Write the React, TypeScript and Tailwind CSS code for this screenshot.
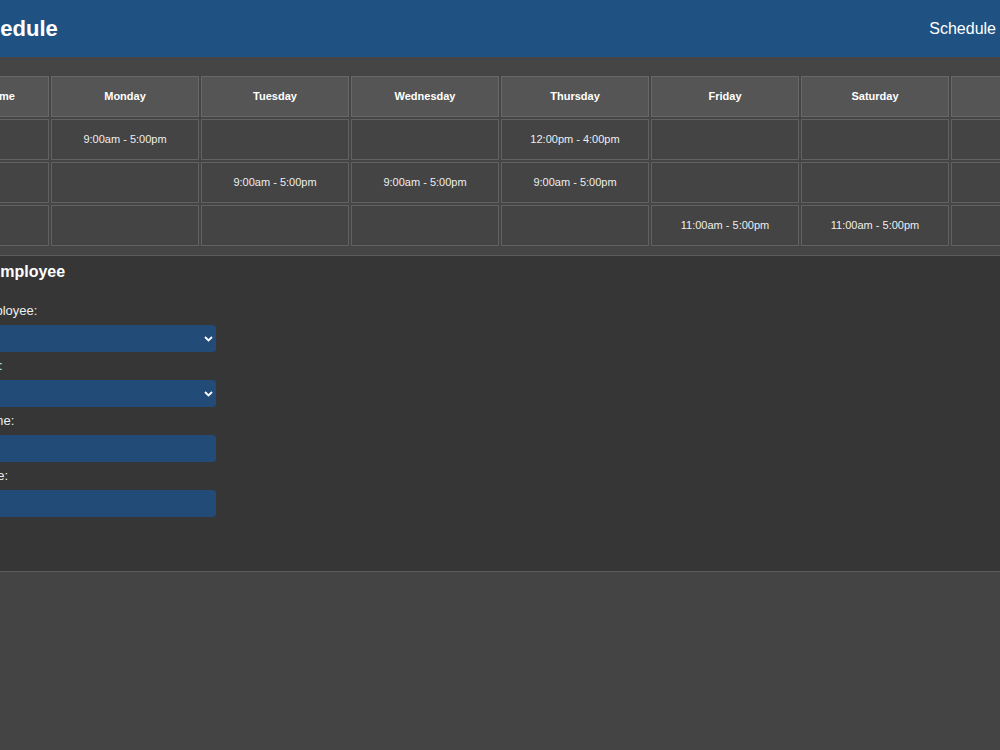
import React from 'react';

type Row = { name: string; shifts: Record<string, string> };

const DAYS = ['Monday', 'Tuesday', 'Wednesday', 'Thursday', 'Friday', 'Saturday', 'Sunday'];

const ROWS: Row[] = [
  { name: 'Alice', shifts: { Monday: '9:00am - 5:00pm', Thursday: '12:00pm - 4:00pm' } },
  {
    name: 'Bob',
    shifts: { Tuesday: '9:00am - 5:00pm', Wednesday: '9:00am - 5:00pm', Thursday: '9:00am - 5:00pm' }
  },
  { name: 'Carol', shifts: { Friday: '11:00am - 5:00pm', Saturday: '11:00am - 5:00pm' } }
];

const Chevron = () => (
  <svg width="9" height="6" viewBox="0 0 9 6" className="shrink-0">
    <path d="M1 1l3.5 3.5L8 1" fill="none" stroke="#ffffff" strokeWidth="1.8" />
  </svg>
);

const Field = ({ label, select }: { label: string; select?: boolean }) => (
  <div className="flex flex-col">
    <label className="text-[13px] leading-[14px] text-[#eeeeee]">{label}</label>
    <div className="mt-[7px] h-[27px] w-[240px] rounded-[4px] bg-[#224b77] flex items-center justify-end pr-[3px]">
      {select && <Chevron />}
    </div>
  </div>
);

export default function App() {
  return (
    <div
      className="w-[1000px] h-[750px] overflow-hidden bg-[#444444] text-white"
      style={{ fontFamily: '"Liberation Sans", Arial, sans-serif' }}
    >
      <header className="h-[57px] bg-[#1f5283] flex items-center justify-between">
        <h1 className="-ml-[40px] text-[22px] font-bold leading-none">Schedule</h1>
        <nav className="pr-[4px] text-[16px]">Schedule</nav>
      </header>

      <div className="pt-[19px] pb-[9px] bg-[#454545]">
        <div className="-ml-[49px] grid grid-cols-[98px_repeat(7,148px)] gap-[2px] w-max">
          <div className="h-[41px] bg-[#555555] border border-[#686868] flex items-center justify-center text-[11px] font-bold">
            Name
          </div>
          {DAYS.map((d) => (
            <div
              key={d}
              className="h-[41px] bg-[#555555] border border-[#686868] flex items-center justify-center text-[11px] font-bold"
            >
              {d}
            </div>
          ))}
          {ROWS.map((r) => (
            <React.Fragment key={r.name}>
              <div className="h-[41px] bg-[#444444] border border-[#626262] flex items-center pl-2 text-[11px]">
                {r.name}
              </div>
              {DAYS.map((d) => (
                <div
                  key={d}
                  className="h-[41px] bg-[#444444] border border-[#626262] flex items-center justify-center text-[11px] text-[#eeeeee]"
                >
                  {r.shifts[d] ?? ''}
                </div>
              ))}
            </React.Fragment>
          ))}
        </div>
      </div>

      <section className="h-[317px] bg-[#363636] border-t border-b border-[#5a5a5a] pt-[6px]">
        <h2 className="-ml-[46px] text-[16px] font-bold leading-[19px]">Add Employee</h2>
        <div className="-ml-[24px] mt-[23px] flex flex-col gap-[7px]">
          <Field label="Employee:" select />
          <Field label="Day:" select />
          <Field label="Name:" />
          <Field label="Time:" />
        </div>
      </section>
    </div>
  );
}
